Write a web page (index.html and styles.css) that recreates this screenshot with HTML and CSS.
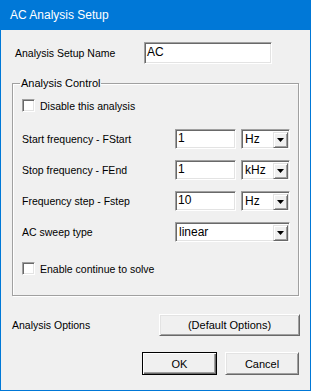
FILE: index.html
```html
<!DOCTYPE html>
<html lang="en">
<head>
    <meta charset="UTF-8">
    <meta name="viewport" content="width=device-width, initial-scale=1.0">
    <title>AC Analysis Setup</title>
    <link rel="stylesheet" href="styles.css">
</head>
<body>
    <div class="window">
        <div class="titlebar">AC Analysis Setup</div>

        <div class="content">
            <div class="name-row">
                <span class="name-label">Analysis Setup Name</span>
                <div class="field name-field">AC</div>
            </div>

            <fieldset class="group">
                <legend>Analysis Control</legend>

                <div class="check-row first">
                    <span class="checkbox"></span>
                    <span>Disable this analysis</span>
                </div>

                <div class="freq-row">
                    <span>Start frequency - FStart</span>
                    <div class="field">1</div>
                    <div class="combo"><span>Hz</span><span class="drop"><svg width="7" height="4" viewBox="0 0 7 4"><polygon points="0,0 7,0 3.5,4" fill="#000"/></svg></span></div>
                </div>

                <div class="freq-row">
                    <span>Stop frequency - FEnd</span>
                    <div class="field">1</div>
                    <div class="combo"><span>kHz</span><span class="drop"><svg width="7" height="4" viewBox="0 0 7 4"><polygon points="0,0 7,0 3.5,4" fill="#000"/></svg></span></div>
                </div>

                <div class="freq-row">
                    <span>Frequency step - Fstep</span>
                    <div class="field">10</div>
                    <div class="combo"><span>Hz</span><span class="drop"><svg width="7" height="4" viewBox="0 0 7 4"><polygon points="0,0 7,0 3.5,4" fill="#000"/></svg></span></div>
                </div>

                <div class="freq-row">
                    <span>AC sweep type</span>
                    <div class="combo wide"><span>linear</span><span class="drop"><svg width="7" height="4" viewBox="0 0 7 4"><polygon points="0,0 7,0 3.5,4" fill="#000"/></svg></span></div>
                </div>

                <div class="check-row last">
                    <span class="checkbox"></span>
                    <span>Enable continue to solve</span>
                </div>
            </fieldset>

            <div class="options-row">
                <span>Analysis Options</span>
                <button class="btn">(Default Options)</button>
            </div>

            <div class="button-row">
                <button class="btn ok">OK</button>
                <button class="btn cancel">Cancel</button>
            </div>
        </div>
    </div>
</body>
</html>
```

FILE: styles.css
```css
body { margin: 0; font-family: "Liberation Sans", Arial, sans-serif; font-size: 10.5px; color: #000; }
.window { width: 311px; height: 391px; box-sizing: border-box; border: 1px solid #0078d7; border-top: 0; background: #f0f0f0; }
.titlebar { height: 30px; line-height: 31px; background: #0078d7; color: #fff; font-size: 12px; padding-left: 10px; margin: 0 -1px; }
.content { padding: 12px 11px 0 11px; }

.name-row { display: grid; grid-template-columns: 132px 128px; align-items: center; }
.name-label { padding-left: 3px; }

.field { box-sizing: border-box; height: 20px; line-height: 16px; padding-left: 2px; background: #fff; border-top: 1px solid #a0a0a0; border-left: 1px solid #a0a0a0; border-right: 1px solid #fff; border-bottom: 1px solid #fff; box-shadow: inset 1px 1px 0 #696969, inset -1px -1px 0 #e3e3e3; font-size: 12px; }
.name-field { height: 22px; line-height: 19px; font-size: 12px; }

.group { box-sizing: border-box; width: 287px; margin: 13px 0 0 0; padding: 0 8px 20px 9px; border: 1px solid #a0a0a0; box-shadow: inset 1px 1px 0 #fff, 1px 1px 0 #fff; }
.group legend { padding: 0 1px; margin-left: -2px; font-size: 11px; line-height: 13px; }

.check-row { display: flex; align-items: center; gap: 5px; height: 13px; }
.check-row.first { margin-top: 9px; }
.check-row.last { margin-top: 20px; }
.checkbox { box-sizing: border-box; width: 13px; height: 13px; background: #fff; border-top: 1px solid #a0a0a0; border-left: 1px solid #a0a0a0; border-right: 1px solid #fff; border-bottom: 1px solid #fff; box-shadow: inset 1px 1px 0 #696969, inset -1px -1px 0 #e3e3e3; }

.freq-row { display: grid; grid-template-columns: 1fr 61px 49px; column-gap: 5px; align-items: center; height: 20px; margin-top: 11px; }
.check-row.first + .freq-row { margin-top: 17px; }

.combo { box-sizing: border-box; height: 20px; display: flex; align-items: center; justify-content: space-between; padding: 0 1px 0 3px; background: #fff; border-top: 1px solid #a0a0a0; border-left: 1px solid #a0a0a0; border-right: 1px solid #fff; border-bottom: 1px solid #fff; box-shadow: inset 1px 1px 0 #696969, inset -1px -1px 0 #e3e3e3; font-size: 12px; }
.combo.wide { grid-column: 2 / 4; }
.drop { box-sizing: border-box; width: 15px; height: 16px; margin-top: 1px; display: flex; align-items: center; justify-content: center; background: #f0f0f0; border-top: 1px solid #e3e3e3; border-left: 1px solid #e3e3e3; border-right: 1px solid #696969; border-bottom: 1px solid #696969; box-shadow: inset 1px 1px 0 #fff, inset -1px -1px 0 #a0a0a0; }

.options-row { display: grid; grid-template-columns: 147px 141px; align-items: center; margin-top: 18px; }

.btn { box-sizing: border-box; height: 22px; padding: 0; font-family: "Liberation Sans", Arial, sans-serif; font-size: 11px; color: #000; background: #f0f0f0; border-top: 1px solid #fff; border-left: 1px solid #fff; border-right: 1px solid #696969; border-bottom: 1px solid #696969; box-shadow: inset 1px 1px 0 #e3e3e3, inset -1px -1px 0 #a0a0a0; }

.button-row { display: flex; justify-content: flex-end; gap: 8px; margin-top: 16px; }
.btn.ok { width: 75px; height: 23px; border: 1px solid #000; box-shadow: inset 1px 1px 0 #fff, inset -1px -1px 0 #696969, inset -2px -2px 0 #a0a0a0; }
.btn.cancel { width: 74px; height: 23px; }
```
